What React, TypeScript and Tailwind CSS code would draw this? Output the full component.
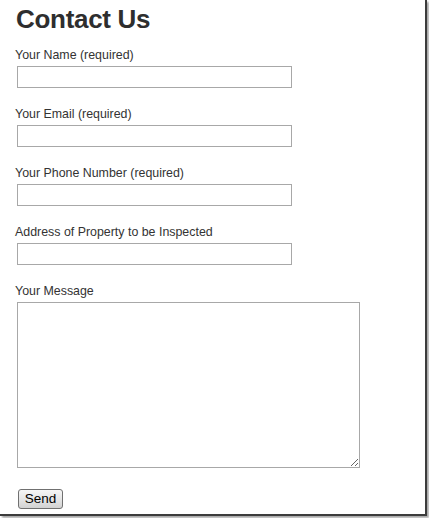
import React from 'react';

const fields = [
  'Your Name (required)',
  'Your Email (required)',
  'Your Phone Number (required)',
  'Address of Property to be Inspected',
];

const ContactForm = () => {
  return (
    <div className="w-[429px] h-[518px] bg-white">
      <div className="w-[427px] h-[516px] border-r-2 border-b-2 border-[#3c3c3c] shadow-[2px_2px_2px_rgba(0,0,0,0.35)] bg-white font-['Liberation_Sans',Arial,sans-serif] text-[#333]">
        <div className="pl-[15px]">
          <h1 className="pt-[4px] pl-px text-[26px] leading-[30px] font-bold tracking-[-0.3px] text-[#2e2e2e]">
            Contact Us
          </h1>

          {/* Single-line fields */}
          <div className="mt-[13px] flex flex-col gap-[18px]">
            {fields.map((label) => (
              <div key={label} className="flex flex-col">
                <label className="text-[12.4px] leading-[16px]">{label}</label>
                <input
                  type="text"
                  className="mt-[3px] ml-[2px] w-[275px] h-[22px] border border-[#a8a8a8] bg-white outline-none"
                />
              </div>
            ))}

            <div className="flex flex-col">
              <label className="text-[12.4px] leading-[16px]">Your Message</label>
              <textarea className="mt-[3px] ml-[2px] w-[343px] h-[166px] border border-[#a8a8a8] bg-white outline-none resize" />
            </div>
          </div>

          <button
            type="button"
            className="mt-[21px] ml-[3px] w-[45px] h-[20px] rounded-[3px] border border-[#707070] bg-gradient-to-b from-[#f6f6f6] via-[#e6e6e6] to-[#d2d2d2] text-[13.5px] leading-[16px] text-black"
          >
            Send
          </button>
        </div>
      </div>
    </div>
  );
};

export default function App() {
  return <ContactForm />;
}
